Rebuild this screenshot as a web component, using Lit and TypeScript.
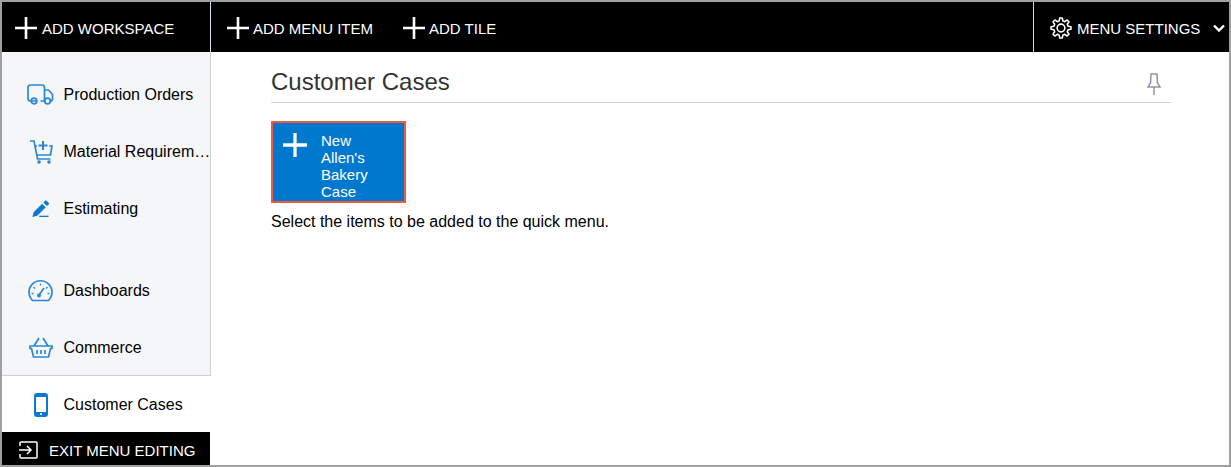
import { LitElement, html, css, svg } from "lit";
import { customElement } from "lit/decorators.js";

const plus = (size: number, weight = 2.6) => html`<svg class="plus" width=${size} height=${size} viewBox="0 0 22 22" aria-hidden="true"><path d="M0 11H22M11 0V22" stroke="#fff" stroke-width=${weight} fill="none"/></svg>`;

const gearPath = (() => {
  const pts: string[] = [];
  const n = 8;
  for (let i = 0; i < n; i++) {
    const a = (i / n) * Math.PI * 2;
    const step = (Math.PI * 2) / n;
    const at = (r: number, t: number) => `${(12 + r * Math.sin(t)).toFixed(2)} ${(12 - r * Math.cos(t)).toFixed(2)}`;
    pts.push(`${i === 0 ? "M" : "L"}${at(11, a - step * 0.17)}`);
    pts.push(`L${at(11, a + step * 0.17)}`);
    pts.push(`L${at(8, a + step * 0.32)}`);
    pts.push(`L${at(8, a + step * 0.68)}`);
  }
  return pts.join("") + "Z";
})();

const blue = "#2c86d6";
const icons: Record<string, unknown> = {
  truck: svg`<path d="M9.500 17H3.500Q1 17 1 14.500V3.500Q1 1 3.500 1H15Q17.500 1 17.500 3.500V17H13.500M17.500 6H21.500L25.500 10.500V15Q25.500 17 23.500 17H23M17.500 17H18.500" fill="none" stroke="${blue}" stroke-width="1.700"/><circle cx="7" cy="17" r="2.800" fill="none" stroke="${blue}" stroke-width="1.700"/><circle cx="20.500" cy="17" r="2.800" fill="none" stroke="${blue}" stroke-width="1.700"/>`,
  cart: svg`<path d="M1 1H5L8.500 19H21.500M6 6H8M20 6H23L21.500 15H8" fill="none" stroke="${blue}" stroke-width="1.700"/><path d="M14 1V10M9.500 5.500H18.500" fill="none" stroke="${blue}" stroke-width="2"/><circle cx="10" cy="22" r="1.800" fill="${blue}"/><circle cx="20" cy="22" r="1.800" fill="${blue}"/>`,
  pen: svg`<path d="M6.500 19.500L0.500 21L2 15L12.500 4.500L17 9ZM14 3L16 1Q17 0 18 1L20.500 3.500Q21.500 4.500 20.500 5.500L18.500 7.500Z" fill="#0f78d0"/><path d="M9 20.300H20.500" stroke="#0f78d0" stroke-width="1.800" fill="none"/>`,
  gauge: svg`<path d="M4.500 21.500A11.500 11.500 0 1 1 20.500 21.500Z" fill="none" stroke="${blue}" stroke-width="1.700"/><path d="M12.500 4.500V6.500M5.500 8L7 9.500M3.500 14.500H5.500M19.500 14.500H21.500M19.500 8L18 9.500" stroke="${blue}" stroke-width="1.300" fill="none"/><path d="M11 16L16 9" stroke="${blue}" stroke-width="1.700"/><circle cx="11" cy="16.500" r="2" fill="${blue}"/>`,
  basket: svg`<path d="M1 9H23V11.500H21.500L19.500 20H4.500L2.500 11.500H1ZM5 9L10 1M19 9L14 1M8 13V17M12 13V17M16 13V17" fill="none" stroke="${blue}" stroke-width="1.700"/>`,
  phone: svg`<rect x="1" y="1" width="12" height="22" rx="2" fill="none" stroke="#0f78d0" stroke-width="2"/><rect x="1" y="1" width="12" height="3" fill="#0f78d0"/><rect x="1" y="19" width="12" height="4" rx="1" fill="#0f78d0"/><circle cx="7" cy="21" r="1" fill="#fff"/>`,
};

const items = [
  { label: "Production Orders", icon: "truck", w: 27, h: 21, vb: "0 0 27 21" },
  { label: "Material Requirem…", icon: "cart", w: 24, h: 24, vb: "0 0 24 24" },
  { label: "Estimating", icon: "pen", w: 17, h: 17, vb: "0 0 21 21" },
  { label: "Dashboards", icon: "gauge", w: 25, h: 23, vb: "0 0 25 23", gap: true },
  { label: "Commerce", icon: "basket", w: 24, h: 21, vb: "0 0 24 21" },
  { label: "Customer Cases", icon: "phone", w: 14, h: 24, vb: "0 0 14 24", active: true },
];

@customElement("app-root")
export class AppRoot extends LitElement {
  static styles = css`
    :host {
      display: block;
      width: 1231px;
      height: 467px;
      box-sizing: border-box;
      border: 2px solid #a0a0a0;
      font-family: "Liberation Sans", Arial, sans-serif;
      font-size: 16px;
      color: #000;
      background: #fff;
      overflow: hidden;
    }
    .top { display: flex; height: 50px; background: #000; color: #fff; font-size: 15px; }
    .top-cell { display: flex; align-items: center; gap: 4px; white-space: nowrap; padding-top: 2px; box-sizing: border-box; }
    .workspace { width: 209px; padding-left: 13px; border-right: 1px solid #cfe0ee; margin-right: 16px; gap: 5px; }
    .tile { margin-left: 30px; }
    .settings {
      margin-left: auto;
      width: 196px;
      flex: none;
      border-left: 1px solid #d8d8d8;
      padding-left: 16px;
      padding-right: 4px;
      gap: 5px;
    }
    .chev { margin-left: auto; flex: none; }
    .plus { flex: none; }
    .body { display: flex; height: 413px; }
    .side { width: 209px; flex: none; display: flex; flex-direction: column; }
    .list {
      flex: 1;
      display: flex;
      flex-direction: column;
      padding-top: 14px;
      background: #f5f6f8;
      border-right: 1px solid #cdd0d3;
      box-sizing: border-box;
    }
    .row { height: 57px; flex: none; display: flex; align-items: center; box-sizing: border-box; white-space: nowrap; }
    .row.gap { margin-top: 25px; }
    .row.active { background: #fff; border-top: 1px solid #cdd0d3; height: 57px; margin-top: -1px; padding-top: 1px; margin-right: -1px; }
    .ico { width: 45.5px; margin-left: 16px; flex: none; display: flex; justify-content: center; }
    .row svg { display: block; }
    .exit {
      height: 33px;
      flex: none;
      background: #000;
      color: #fff;
      font-size: 15px;
      display: flex;
      align-items: center;
      gap: 11px;
      padding: 3px 0 0 17px;
      margin-right: 1px;
      box-sizing: border-box;
      white-space: nowrap;
    }
    .main { flex: 1; padding: 13px 58px 0 60px; min-width: 0; }
    .head { display: flex; justify-content: space-between; align-items: center; height: 37px; border-bottom: 1px solid #d4d4d4; }
    h1 { margin: 0; font-size: 24px; font-weight: 400; color: #333; line-height: 32px; position: relative; top: -2px; }
    .pin { margin-right: 10px; }
    .tile-btn {
      margin-top: 18px;
      width: 135px;
      height: 82px;
      box-sizing: border-box;
      background: #0078ce;
      border: 2px solid #f4593a;
      color: #fff;
      display: flex;
      font-size: 15px;
      line-height: 17px;
    }
    .tile-btn .plus { margin: 10px 0 0 10px; }
    .tile-text { margin-left: 14px; padding-top: 9px; width: 70px; }
    .hint { margin-top: 10px; line-height: 18px; }
  `;

  render() {
    return html`
      <div class="top">
        <div class="top-cell workspace">${plus(22)}<span>ADD WORKSPACE</span></div>
        <div class="top-cell">${plus(22)}<span>ADD MENU ITEM</span></div>
        <div class="top-cell tile">${plus(22)}<span>ADD TILE</span></div>
        <div class="top-cell settings">
          <svg width="22" height="22" viewBox="0 0 24 24" aria-hidden="true"><path d=${gearPath} fill="none" stroke="#fff" stroke-width="1.700" stroke-linejoin="round"/><circle cx="12" cy="12" r="4.200" fill="none" stroke="#fff" stroke-width="1.700"/></svg>
          <span>MENU SETTINGS</span>
          <svg class="chev" width="12" height="9" viewBox="0 0 12 9" aria-hidden="true"><path d="M1 1.500L6 6.500L11 1.500" fill="none" stroke="#fff" stroke-width="2.400"/></svg>
        </div>
      </div>
      <div class="body">
        <div class="side">
          <div class="list">
            ${items.map(
              (i) => html`<div class="row ${i.gap ? "gap" : ""} ${i.active ? "active" : ""}">
                <div class="ico"><svg width=${i.w} height=${i.h} viewBox=${i.vb} aria-hidden="true">${icons[i.icon]}</svg></div>
                <div>${i.label}</div>
              </div>`
            )}
          </div>
          <div class="exit">
            <svg width="19" height="18" viewBox="0 0 19 18" aria-hidden="true"><path d="M1 5V2Q1 1 2 1H17Q18 1 18 2V16Q18 17 17 17H2Q1 17 1 16V13M0 9H12M8 5L12 9L8 13" fill="none" stroke="#fff" stroke-width="1.500"/></svg>
            <span>EXIT MENU EDITING</span>
          </div>
        </div>
        <div class="main">
          <div class="head">
            <h1>Customer Cases</h1>
            <svg class="pin" width="14" height="22" viewBox="0 0 14 22" aria-hidden="true"><path d="M4 1H10L10.500 10L13 14H1L3.500 10ZM7 14V22" fill="none" stroke="#8d97a3" stroke-width="1.500"/></svg>
          </div>
          <div class="tile-btn">
            ${plus(24, 3)}
            <div class="tile-text">New<br />Allen's<br />Bakery<br />Case</div>
          </div>
          <div class="hint">Select the items to be added to the quick menu.</div>
        </div>
      </div>
    `;
  }
}
